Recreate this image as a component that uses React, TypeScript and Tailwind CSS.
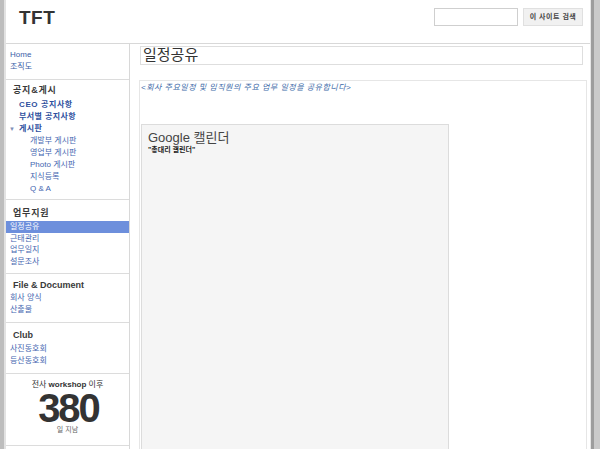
import React from "react";

const font = { fontFamily: '"Liberation Sans", "Noto Sans CJK KR", sans-serif' };

const Section = ({ children, className = "" }: { children: React.ReactNode; className?: string }) => (
  <div className={"border-b border-[#dcdcdc] " + className}>{children}</div>
);

const Heading = ({ children, wide = false }: { children: React.ReactNode; wide?: boolean }) => (
  <div className={"pl-[7px] text-[9px] leading-[12px] font-bold text-[#3a3a3a] " + (wide ? "tracking-[0.8px]" : "")}>
    {children}
  </div>
);

export default function App() {
  const boards = ["개발부 게시판", "영업부 게시판", "Photo 게시판", "지식등록", "Q & A"];
  const work = ["근태관리", "업무일지", "설문조사"];

  return (
    <div style={font} className="flex h-[449px] w-[600px] overflow-hidden bg-[#c8c8c8]">
      <div className="flex w-[6px] shrink-0">
        <div className="w-[4px] bg-[#bdbdbd]" />
        <div className="w-[2px] bg-[#e2e2e2]" />
      </div>

      <div className="flex w-[584px] shrink-0 flex-col bg-white">
        {/* header */}
        <header className="flex h-[44px] shrink-0 items-center justify-between border-b border-[#d8d8d8] pl-[13px] pr-[7px]">
          <div className="mt-[-6px] text-[19px] font-bold tracking-[0.5px] text-[#333]">TFT</div>
          <div className="mt-[-9px] flex items-center gap-[5px]">
            <input className="h-[18px] w-[84px] border border-[#cfcfcf] bg-white outline-none" />
            <button className="h-[18px] w-[60px] border border-[#e0e0e0] bg-[#f1f1f1] text-[7px] font-bold tracking-[0.5px] text-[#444]">
              이 사이트 검색
            </button>
          </div>
        </header>

        <div className="flex min-h-0 flex-1">
          {/* sidebar */}
          <aside className="w-[124px] shrink-0 border-r border-[#d8d8d8] text-[8px] leading-[12px]">
            <Section className="pb-[6px] pl-[4px] pt-[5px]">
              <div className="text-[#3b5ea8]">Home</div>
              <div className="text-[#3b5ea8]">조직도</div>
            </Section>

            <Section className="pb-[4px] pt-[4px]">
              <Heading wide>공지&amp;게시</Heading>
              <div className="mt-[3px] pl-[13px] font-bold tracking-[0.6px] text-[#2d4f9e]">CEO 공지사항</div>
              <div className="pl-[13px] font-bold tracking-[0.4px] text-[#2d4f9e]">부서별 공지사항</div>
              <div className="flex items-center pl-[3px] font-bold tracking-[0.4px] text-[#2d4f9e]">
                <span className="w-[10px] text-[6px] text-[#7f8fb8]">▼</span>
                게시판
              </div>
              {boards.map((b) => (
                <div key={b} className="pl-[24px] text-[#4466b0]">
                  {b}
                </div>
              ))}
            </Section>

            <Section className="pb-[6px] pt-[7px]">
              <Heading wide>업무지원</Heading>
              <div className="mt-[2px] bg-[#6d8fdc] pl-[4px] leading-[11.5px] text-white">일정공유</div>
              {work.map((w) => (
                <div key={w} className="pl-[4px] leading-[11.5px] text-[#4466b0]">
                  {w}
                </div>
              ))}
            </Section>

            <Section className="pb-[6px] pt-[5px]">
              <Heading>File &amp; Document</Heading>
              <div className="mt-[1px] pl-[4px] text-[#4466b0]">회사 양식</div>
              <div className="pl-[4px] text-[#4466b0]">산출물</div>
            </Section>

            <Section className="pb-[6px] pt-[6px]">
              <Heading>Club</Heading>
              <div className="mt-[2px] pl-[4px] text-[#4466b0]">사진동호회</div>
              <div className="pl-[4px] text-[#4466b0]">등산동호회</div>
            </Section>

            <Section className="flex h-[72px] flex-col items-center pt-[5px]">
              <div className="text-[8px] leading-[12px] text-[#333]">
                전사 <span className="font-bold">workshop</span> 이후
              </div>
              <div className="pl-[2px] text-[40px] font-bold leading-[34px] tracking-[-2px] text-[#333]">380</div>
              <div className="text-[7px] leading-[9px] text-[#666]">일 지남</div>
            </Section>
          </aside>

          {/* main */}
          <main className="flex min-w-0 flex-1 flex-col pl-[9px] pr-[3px]">
            <div className="ml-[1px] mr-[4px] mt-[2px] flex h-[19px] items-center border border-[#dedede] pl-[2px] text-[15px] text-[#333]">
              일정공유
            </div>
            <div className="mt-[15px] flex-1 border border-b-0 border-[#e6e6e6] pl-[1px] pt-[2px]">
              <div className="text-[8px] italic leading-[10px] tracking-[0.5px] text-[#3d6aa8]">
                &lt;회사 주요일정 및 임직원의 주요 업무 일정을 공유합니다&gt;
              </div>
              <div className="mt-[31px] h-[340px] w-[308px] border border-b-0 border-[#dcdcdc] bg-[#f5f5f5] pl-[6px] pt-[5px]">
                <div className="text-[13px] leading-[15px] text-[#444]">Google 캘린더</div>
                <div className="text-[7px] font-bold leading-[9px] text-[#222]">"총대리 캘린더"</div>
              </div>
            </div>
          </main>
        </div>
      </div>

      <div className="flex flex-1">
        <div className="w-[1px] bg-[#e6e6e6]" />
        <div className="w-[3px] bg-[#9d9d9d]" />
        <div className="flex-1 bg-[#cacaca]" />
      </div>
    </div>
  );
}
